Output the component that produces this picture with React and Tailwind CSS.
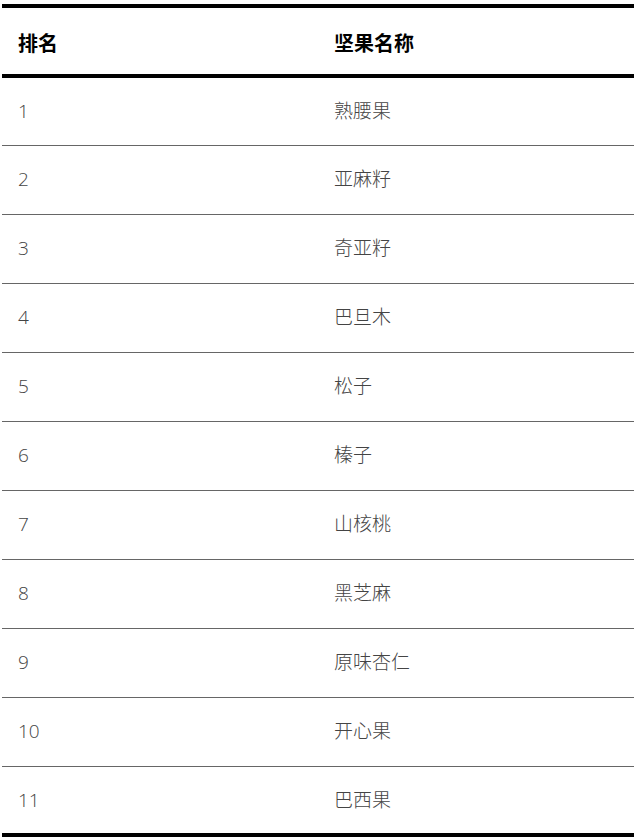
const rows = [
  "熟腰果",
  "亚麻籽",
  "奇亚籽",
  "巴旦木",
  "松子",
  "榛子",
  "山核桃",
  "黑芝麻",
  "原味杏仁",
  "开心果",
  "巴西果",
];

export default function App() {
  return (
    <div
      className="bg-white w-[640px] h-[840px] pt-[4px] px-[2px]"
      style={{ fontFamily: '"Open Sans", "Noto Sans CJK SC", sans-serif' }}
    >
      <table className="w-[632px] border-collapse table-fixed">
        <thead>
          <tr className="border-t-4 border-b-4 border-black">
            <th className="w-1/2 h-[70px] px-4 pt-[6px] text-left text-[20px] font-bold text-black">
              排名
            </th>
            <th className="w-1/2 h-[70px] px-4 pt-[6px] text-left text-[20px] font-bold text-black">
              坚果名称
            </th>
          </tr>
        </thead>
        <tbody>
          {rows.map((name, i) => (
            <tr
              key={name}
              className={
                i === rows.length - 1
                  ? "border-b-4 border-black"
                  : "border-b border-[#666]"
              }
            >
              <td className="h-[69px] px-4 text-[19px] font-light text-[#444]">
                {i + 1}
              </td>
              <td className="h-[69px] px-4 text-[19px] font-light text-[#444]">
                {name}
              </td>
            </tr>
          ))}
        </tbody>
      </table>
    </div>
  );
}
